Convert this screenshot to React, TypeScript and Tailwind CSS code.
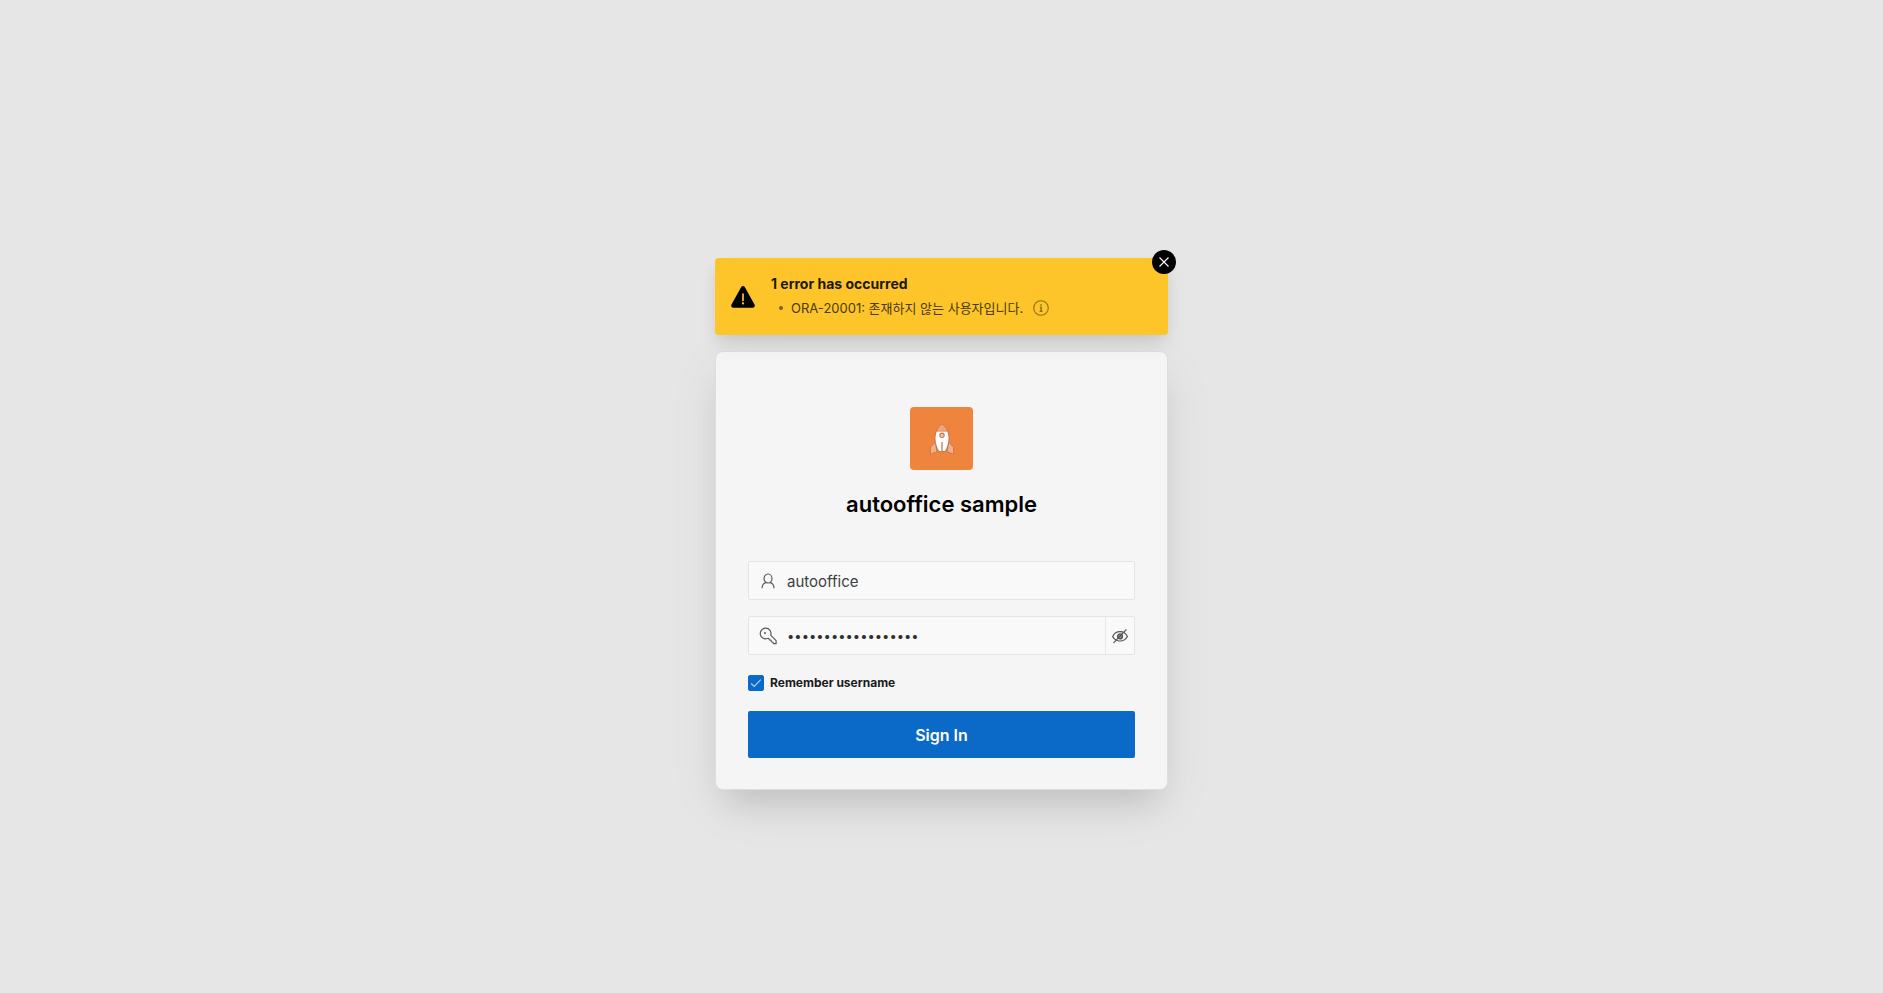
import { useState } from "react";

function WarningIcon() {
  return (
    <svg viewBox="0 0 24 22" className="h-[22px] w-6 shrink-0" aria-hidden="true">
      <path
        d="M10.1 1.2a2.2 2.2 0 0 1 3.8 0l9.6 17.3a2.2 2.2 0 0 1-1.9 3.3H2.4a2.2 2.2 0 0 1-1.9-3.3z"
        fill="#000"
      />
      <path d="M12 8.2v6.2" stroke="#fdc52a" strokeWidth="1.7" strokeLinecap="round" />
      <circle cx="12" cy="17.4" r="1.15" fill="#fdc52a" />
    </svg>
  );
}

function CloseIcon() {
  return (
    <svg viewBox="0 0 10 10" className="size-[10px]" aria-hidden="true">
      <path d="M.5.5l9 9M9.5.5l-9 9" stroke="#fff" strokeWidth="1.1" />
    </svg>
  );
}

function InfoIcon() {
  return (
    <svg viewBox="0 0 16 16" className="size-4" fill="none" aria-hidden="true">
      <circle cx="8" cy="8" r="7.3" stroke="#8f7019" strokeWidth="1.1" />
      <circle cx="8" cy="5" r=".8" fill="#6a5215" />
      <path d="M6.9 7.3h1.2v3.8M6.6 11.2h2.9" stroke="#6a5215" strokeWidth="1.1" />
    </svg>
  );
}

function RocketIcon() {
  return (
    <svg viewBox="0 0 26 32" className="h-8 w-[26px]" aria-hidden="true">
      <path
        d="M6.5 19L1.4 24.3v6.9l6.4-2.4zM19.5 19l5.1 5.3v6.9l-6.4-2.4z"
        fill="#f3b08b"
        stroke="#c9703f"
        strokeWidth=".8"
      />
      <path
        d="M13 1c3.8 3 7 8 7 14.2 0 5-1.5 9.3-3.8 13.3H9.8C7.5 24.5 6 20.2 6 15.2 6 9 9.2 4 13 1z"
        fill="#fff"
        stroke="#b9663a"
        strokeWidth=".8"
      />
      <path d="M13 1c2.400 1.900 4.500 4.500 5.700 7.200H7.300C8.500 5.500 10.600 2.900 13 1z" fill="#f0a57c" stroke="#c9703f" strokeWidth=".6" />
      <circle cx="13" cy="12.3" r="2.2" fill="#f4c3a6" stroke="#d2744a" strokeWidth="1.1" />
      <path d="M13 19v11.5" stroke="#c08b5f" strokeWidth="1.4" />
    </svg>
  );
}

function UserIcon() {
  return (
    <svg viewBox="0 0 16 16" className="size-4" fill="none" stroke="#5a5a5a" strokeWidth="1.2" aria-hidden="true">
      <ellipse cx="8" cy="5.5" rx="4" ry="4.5" />
      <path d="M2 15.2c0-3.2 1.3-5 4.3-5.8M14 15.2c0-3.2-1.3-5-4.3-5.8" />
    </svg>
  );
}

function KeyIcon() {
  return (
    <svg viewBox="0 0 18 18" className="size-[18px]" fill="none" stroke="#5a5a5a" strokeWidth="1.2" aria-hidden="true">
      <path
        d="M6.6 1.2a5.3 5.3 0 1 0 1.7 10.3l1.5-.1.7 1.5 1.5.3.4 1.5 1.6.5.5 1.5h2.6v-3l-5.4-5.500A5.300 5.300 0 0 0 6.600 1.200z"
        strokeLinejoin="round"
      />
      <circle cx="6" cy="6" r="1" fill="#5a5a5a" stroke="none" />
    </svg>
  );
}

function EyeOffIcon() {
  return (
    <svg viewBox="0 0 16 16" className="size-4" fill="none" stroke="#555" strokeWidth="1.2" aria-hidden="true">
      <path d="M.6 8.500C2.200 5.300 4.800 3.700 8 3.700s5.800 1.600 7.400 4.800c-1.600 3-4.200 4.500-7.400 4.500S2.200 11.500.6 8.500z" />
      <circle cx="8" cy="8.4" r="2.5" fill="#888" />
      <path d="M1.500 14.800L14.500 1.300" />
    </svg>
  );
}

function ErrorAlert({ onClose }: { onClose: () => void }) {
  return (
    <section
      role="alert"
      className="relative flex items-center gap-4 rounded bg-[#fdc52a] px-4 py-4 text-[#1d1803] shadow-[0_8px_16px_-4px_rgba(0,0,0,0.12),0_12px_24px_0_rgba(0,0,0,0.04)]"
    >
      <WarningIcon />
      <div className="pb-px">
        <h2 className="text-sm leading-5 font-bold">1 error has occurred</h2>
        <ul className="pt-1">
          <li className="flex items-center text-[13px] leading-5 text-[#4a3b0d]">
            <span className="mx-2 size-1 rounded-full bg-[#7a5f18]" />
            <span>ORA-20001: 존재하지 않는 사용자입니다.</span>
            <button type="button" aria-label="Error details" className="ml-[10px]">
              <InfoIcon />
            </button>
          </li>
        </ul>
      </div>
      <button
        type="button"
        aria-label="Close"
        onClick={onClose}
        className="absolute -top-2 -right-2 flex size-6 items-center justify-center rounded-full bg-black"
      >
        <CloseIcon />
      </button>
    </section>
  );
}

export default function App() {
  const [alertOpen, setAlertOpen] = useState(true);
  const [username, setUsername] = useState("autooffice");
  const [password, setPassword] = useState("autooffice-sample1");
  const [showPassword, setShowPassword] = useState(false);
  const [remember, setRemember] = useState(true);

  return (
    <main className="flex min-h-screen flex-col items-center bg-[#e6e6e6] px-4 pt-[258px] pb-16 font-['Inter','Noto_Sans_CJK_KR',sans-serif]">
      <div className="flex w-full max-w-[453px] flex-col gap-4">
        {alertOpen && <ErrorAlert onClose={() => setAlertOpen(false)} />}
        <form
          onSubmit={(e) => e.preventDefault()}
          className="flex flex-col rounded-lg border border-[#dedede] bg-[#f5f5f5] px-8 pt-[55px] pb-[31px] shadow-[0_24px_32px_-12px_rgba(0,0,0,0.12),0_16px_56px_0_rgba(0,0,0,0.06)]"
        >
          <div className="flex flex-col items-center gap-5">
            <div className="flex size-[63px] items-center justify-center rounded bg-[#ee843e]">
              <RocketIcon />
            </div>
            <h1 className="text-[22px] leading-7 font-semibold text-black">autooffice sample</h1>
          </div>

          <div className="mt-[43px] flex flex-col gap-4">
            <div className="flex h-[39px] items-center rounded-xs border border-[#e4e4e4] bg-[#f9f9f9]">
              <label htmlFor="username" aria-label="Username" className="flex w-[38px] justify-center">
                <UserIcon />
              </label>
              <input
                id="username"
                type="text"
                aria-label="Username"
                value={username}
                onChange={(e) => setUsername(e.target.value)}
                className="h-full min-w-0 flex-1 bg-transparent pt-px text-[15px] text-[#404040] outline-none"
              />
            </div>
            <div className="flex h-[39px] items-center rounded-xs border border-[#e4e4e4] bg-[#f9f9f9]">
              <label htmlFor="password" aria-label="Password" className="flex w-[38px] justify-center">
                <KeyIcon />
              </label>
              <input
                id="password"
                type={showPassword ? "text" : "password"}
                aria-label="Password"
                value={password}
                onChange={(e) => setPassword(e.target.value)}
                className="h-full min-w-0 flex-1 bg-transparent pt-px text-[13px] text-[#303030] outline-none"
              />
              <button
                type="button"
                aria-label="Show password"
                onClick={() => setShowPassword(!showPassword)}
                className="flex h-full w-[29px] items-center justify-center border-l border-[#e8e8e8]"
              >
                <EyeOffIcon />
              </button>
            </div>
          </div>

          <label className="mt-4 flex items-center gap-[6px] text-xs leading-6 font-bold text-[#1a1a1a]">
            <span className="grid size-4">
              <input
                type="checkbox"
                checked={remember}
                onChange={(e) => setRemember(e.target.checked)}
                className="col-start-1 row-start-1 size-4 appearance-none rounded-xs border border-[#0b69c7] bg-white checked:bg-[#0b69c7]"
              />
              <svg viewBox="0 0 16 16" className="pointer-events-none col-start-1 row-start-1 size-4" fill="none" aria-hidden="true">
                <path d="M3.2 8.5l3 3 6.6-6.9" stroke="#b5d3ef" strokeWidth="1.1" />
              </svg>
            </span>
            Remember username
          </label>

          <button
            type="submit"
            className="mt-4 h-[47px] rounded-xs bg-[#0b69c7] text-base font-semibold text-white"
          >
            Sign In
          </button>
        </form>
      </div>
    </main>
  );
}
